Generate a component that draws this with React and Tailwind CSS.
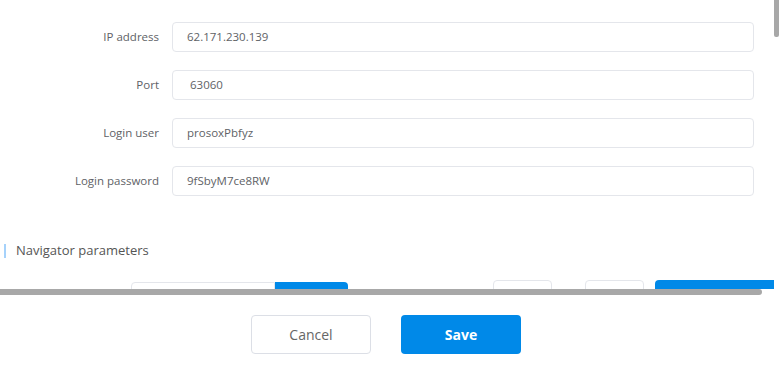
import React from 'react';

const fields = [
  { label: 'IP address', value: '62.171.230.139' },
  { label: 'Port', value: '\u00a063060' },
  { label: 'Login user', value: 'prosoxPbfyz' },
  { label: 'Login password', value: '9fSbyM7ce8RW' },
];

const App = () => {
  return (
    <div className="w-[779px] h-[369px] bg-white overflow-hidden" style={{ fontFamily: '"Open Sans", "Noto Sans", sans-serif' }}>
      {/* Scrollable form area */}
      <div className="flex h-[295px]">
        <div className="flex flex-col w-[774px] shrink-0">
          <div className="h-[289px] overflow-hidden">
            {/* Connection fields */}
            <div className="flex flex-col gap-[18px] pt-[22px]">
              {fields.map((f) => (
                <div key={f.label} className="flex items-center">
                  <label className="w-[159px] text-right text-[11.5px] text-[#606266]">{f.label}</label>
                  <div className="ml-[13px] w-[582px] h-[30px] border border-[#e4e6eb] rounded-[4px] flex items-center pl-[14px] text-[11.5px] text-[#606266]">
                    {f.value}
                  </div>
                </div>
              ))}
            </div>

            {/* Section title */}
            <div className="flex items-center mt-[48px] h-[14px]">
              <div className="w-[2px] h-[14px] bg-[#a6d2fb] ml-[4px]"></div>
              <span className="ml-[10px] text-[13px] text-[#555]">Navigator parameters</span>
            </div>

            {/* Partially visible row */}
            <div className="flex items-start mt-[22px] overflow-hidden">
              <div className="ml-[131px] mt-[2px] w-[144px] h-[30px] shrink-0 border border-[#e4e6eb] rounded-l-[4px]"></div>
              <div className="mt-[2px] w-[73px] h-[30px] shrink-0 bg-[#0089e8] rounded-r-[4px]"></div>
              <div className="ml-[145px] w-[59px] h-[30px] shrink-0 border border-[#e4e6eb] rounded-[4px]"></div>
              <div className="ml-[33px] w-[59px] h-[30px] shrink-0 border border-[#e4e6eb] rounded-[4px]"></div>
              <div className="ml-[11px] w-[140px] h-[30px] shrink-0 bg-[#0089e8] rounded-[4px]"></div>
            </div>
          </div>
          {/* Horizontal scrollbar */}
          <div className="h-[6px]">
            <div className="w-[762px] h-[6px] bg-[#a8a8a8] rounded-r-[3px]"></div>
          </div>
        </div>
        {/* Vertical scrollbar */}
        <div className="w-[5px]">
          <div className="h-[37px] bg-[#a8a8a8] rounded-b-[2px]"></div>
        </div>
      </div>

      {/* Footer */}
      <div className="flex justify-center gap-[30px] pt-[20px] w-[772px]">
        <button className="w-[120px] h-[39px] border border-[#dcdfe6] rounded-[4px] bg-white text-[14px] text-[#666]">Cancel</button>
        <button className="w-[120px] h-[39px] rounded-[4px] bg-[#0089e8] text-[14px] font-bold text-white">Save</button>
      </div>
    </div>
  );
};

export default App;
